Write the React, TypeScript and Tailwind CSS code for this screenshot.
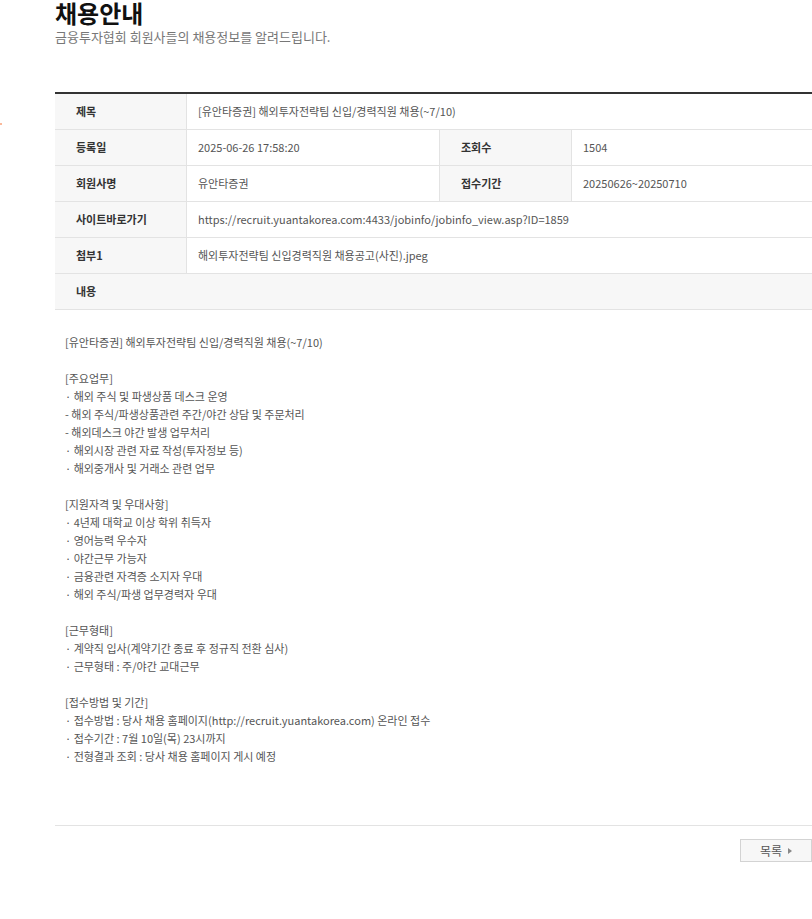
import React from "react";

const font = { fontFamily: '"Noto Sans CJK KR", "Noto Sans", sans-serif' };

const contentLines: string[] = [
  "[유안타증권] 해외투자전략팀 신입/경력직원 채용(~7/10)",
  "",
  "[주요업무]",
  "· 해외 주식 및 파생상품 데스크 운영",
  "- 해외 주식/파생상품관련 주간/야간 상담 및 주문처리",
  "- 해외데스크 야간 발생 업무처리",
  "· 해외시장 관련 자료 작성(투자정보 등)",
  "· 해외중개사 및 거래소 관련 업무",
  "",
  "[지원자격 및 우대사항]",
  "· 4년제 대학교 이상 학위 취득자",
  "· 영어능력 우수자",
  "· 야간근무 가능자",
  "· 금융관련 자격증 소지자 우대",
  "· 해외 주식/파생 업무경력자 우대",
  "",
  "[근무형태]",
  "· 계약직 입사(계약기간 종료 후 정규직 전환 심사)",
  "· 근무형태 : 주/야간 교대근무",
  "",
  "[접수방법 및 기간]",
  "· 접수방법 : 당사 채용 홈페이지(http://recruit.yuantakorea.com) 온라인 접수",
  "· 접수기간 : 7월 10일(목) 23시까지",
  "· 전형결과 조회 : 당사 채용 홈페이지 게시 예정",
];

function Label({ children }: { children: React.ReactNode }) {
  return (
    <div className="w-[132px] shrink-0 bg-[#f7f7f7] border-r border-[#e3e3e3] pl-[21px] flex items-center text-[11px] font-bold text-[#333]">
      {children}
    </div>
  );
}

function Value({ children }: { children: React.ReactNode }) {
  return (
    <div className="flex-1 pl-[11px] flex items-center text-[11px] text-[#555]">
      {children}
    </div>
  );
}

export default function App() {
  return (
    <div className="relative bg-white min-h-[919px] w-[812px] overflow-hidden" style={font}>
      <div className="absolute left-0 top-[123px] w-[2px] h-[2px] bg-[#f9a27a] rounded-full" />
      <div className="pl-[55px]">
        <h1 className="text-[24px] font-bold text-[#111] leading-[26px]">채용안내</h1>
        <p className="text-[13px] text-[#777] leading-[16px] mt-[3px]">
          금융투자협회 회원사들의 채용정보를 알려드립니다.
        </p>

        <div className="mt-[47px] border-t-2 border-[#333]">
          <div className="flex h-[36px] border-b border-[#e3e3e3]">
            <Label>제목</Label>
            <Value>[유안타증권] 해외투자전략팀 신입/경력직원 채용(~7/10)</Value>
          </div>
          <div className="flex h-[36px] border-b border-[#e3e3e3]">
            <Label>등록일</Label>
            <div className="w-[253px] shrink-0 pl-[11px] flex items-center text-[11px] text-[#555] border-r border-[#e3e3e3]">
              2025-06-26 17:58:20
            </div>
            <Label>조회수</Label>
            <Value>1504</Value>
          </div>
          <div className="flex h-[36px] border-b border-[#e3e3e3]">
            <Label>회원사명</Label>
            <div className="w-[253px] shrink-0 pl-[11px] flex items-center text-[11px] text-[#555] border-r border-[#e3e3e3]">
              유안타증권
            </div>
            <Label>접수기간</Label>
            <Value>20250626~20250710</Value>
          </div>
          <div className="flex h-[36px] border-b border-[#e3e3e3]">
            <Label>사이트바로가기</Label>
            <Value>https://recruit.yuantakorea.com:4433/jobinfo/jobinfo_view.asp?ID=1859</Value>
          </div>
          <div className="flex h-[36px] border-b border-[#e3e3e3]">
            <Label>첨부1</Label>
            <Value>해외투자전략팀 신입경력직원 채용공고(사진).jpeg</Value>
          </div>
          <div className="flex h-[36px] border-b border-[#e3e3e3] bg-[#f7f7f7] pl-[21px] items-center text-[11px] font-bold text-[#333]">
            내용
          </div>
          <div className="pt-[23px] pb-[60px] pl-[10px] border-b border-[#e3e3e3] text-[11px] leading-[18px] text-[#555]">
            {contentLines.map((l, i) => (
              <div key={i} className="h-[18px] whitespace-pre">
                {l}
              </div>
            ))}
          </div>
        </div>

        <div className="flex justify-end mt-[13px]">
          <button className="w-[72px] h-[23px] border border-[#d3d3d3] bg-[#f7f7f7] flex items-center justify-center gap-[6px] text-[12px] text-[#555]">
            <span>목록</span>
            <svg width="4" height="6" viewBox="0 0 4 6">
              <path d="M0 0 L4 3 L0 6 Z" fill="#888" />
            </svg>
          </button>
        </div>
      </div>
    </div>
  );
}
